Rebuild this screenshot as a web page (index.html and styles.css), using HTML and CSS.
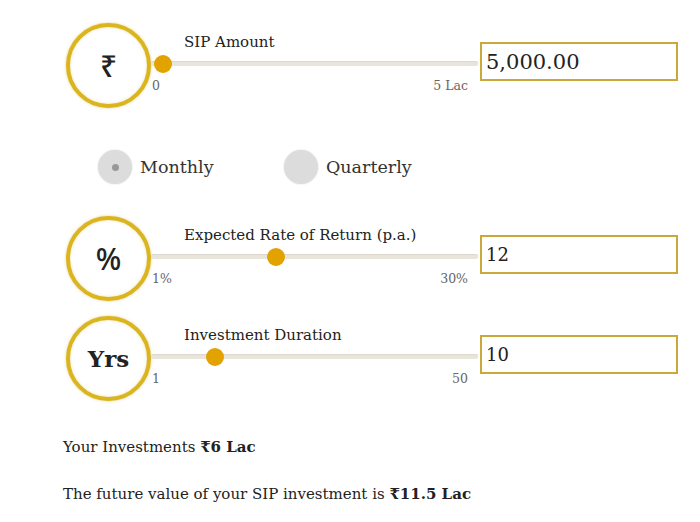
FILE: index.html
```html
<!DOCTYPE html>
<html lang="en">
<head>
  <meta charset="UTF-8" />
  <meta name="viewport" content="width=device-width, initial-scale=1.0" />
  <title>SIP Calculator</title>
  <link rel="stylesheet" href="styles.css">
</head>
<body>
  <div class="calc">
    <div class="row">
      <div class="badge badge-sym">₹</div>
      <div class="slider">
        <div class="label">SIP Amount</div>
        <div class="track">
          <span class="thumb" style="left: 3px;"></span>
        </div>
        <div class="ticks"><span>0</span><span>5 Lac</span></div>
      </div>
      <input class="value value-big" type="text" value="5,000.00">
    </div>

    <div class="freq">
      <label class="radio"><span class="dot checked"></span>Monthly</label>
      <label class="radio"><span class="dot"></span>Quarterly</label>
    </div>

    <div class="row">
      <div class="badge badge-sym">%</div>
      <div class="slider">
        <div class="label">Expected Rate of Return (p.a.)</div>
        <div class="track">
          <span class="thumb" style="left: 116px;"></span>
        </div>
        <div class="ticks"><span>1%</span><span>30%</span></div>
      </div>
      <input class="value" type="text" value="12">
    </div>

    <div class="row">
      <div class="badge badge-yrs">Yrs</div>
      <div class="slider">
        <div class="label">Investment Duration</div>
        <div class="track">
          <span class="thumb" style="left: 55px;"></span>
        </div>
        <div class="ticks"><span>1</span><span>50</span></div>
      </div>
      <input class="value" type="text" value="10">
    </div>
  </div>

  <div class="result">
    <p>Your Investments <b>₹6 Lac</b></p>
    <p>The future value of your SIP investment is <b>₹11.5 Lac</b></p>
  </div>
</body>
</html>
```

FILE: styles.css
```css
* {
  box-sizing: border-box;
  margin: 0;
  padding: 0;
}

body {
  font-family: 'DejaVu Serif', 'Liberation Serif', serif;
  background: #fff;
  color: #222;
  width: 700px;
  height: 522px;
  overflow: hidden;
}

.calc {
  padding: 23px 0 0 66px;
  width: 678px;
}

.row {
  display: flex;
  height: 85px;
}

.row + .row {
  margin-top: 15px;
}

.badge {
  width: 85px;
  height: 85px;
  flex: none;
  border-radius: 50%;
  border: 4px solid #dab51e;
  background: #fff;
  box-shadow: 0 0 3px rgba(190, 150, 0, 0.45), inset 0 0 3px rgba(190, 150, 0, 0.3);
  display: flex;
  justify-content: center;
  align-items: center;
  color: #222;
}

.badge-sym {
  font-family: 'Noto Sans', 'DejaVu Sans', sans-serif;
  font-size: 30px;
  font-weight: 500;
}

.badge-yrs {
  font-weight: bold;
  font-size: 23px;
}

.slider {
  flex: 1;
  padding-top: 9px;
}

.label {
  padding-left: 33px;
  font-size: 15px;
  line-height: 20px;
  color: #222;
}

.track {
  position: relative;
  height: 5px;
  margin-top: 9px;
  border-radius: 2px;
  background: #e9e5da;
  box-shadow: inset 0 1px 1px rgba(0, 0, 0, 0.06);
}

.thumb {
  position: absolute;
  top: -6px;
  width: 18px;
  height: 18px;
  border-radius: 50%;
  background: #e2a200;
}

.ticks {
  display: flex;
  justify-content: space-between;
  padding: 0 10px 0 1px;
  margin-top: 13px;
  font-size: 12.5px;
  line-height: 14px;
  color: #666;
}

.value {
  align-self: flex-start;
  margin-top: 19px;
  margin-left: 2px;
  width: 198px;
  height: 39px;
  border: 2px solid #c9a83c;
  padding: 0 4px;
  font-family: 'DejaVu Serif', serif;
  font-size: 18px;
  color: #222;
  background: #fff;
  outline: none;
}

.value-big {
  font-size: 21px;
}

.freq {
  display: flex;
  margin: 42px 0 32px 32px;
}

.radio {
  display: flex;
  align-items: center;
  width: 186px;
  font-size: 17.5px;
  color: #333;
}

.dot {
  width: 34px;
  height: 34px;
  border-radius: 50%;
  background: #dcdcdc;
  box-shadow: 0 0 2px rgba(0, 0, 0, 0.15);
  margin-right: 8px;
  display: flex;
  justify-content: center;
  align-items: center;
}

.dot.checked::after {
  content: '';
  width: 7px;
  height: 7px;
  border-radius: 50%;
  background: #999;
}

.result {
  padding: 35px 0 0 63px;
  font-size: 15px;
  color: #222;
}

.result p {
  line-height: 22px;
  margin-bottom: 25px;
}
```
